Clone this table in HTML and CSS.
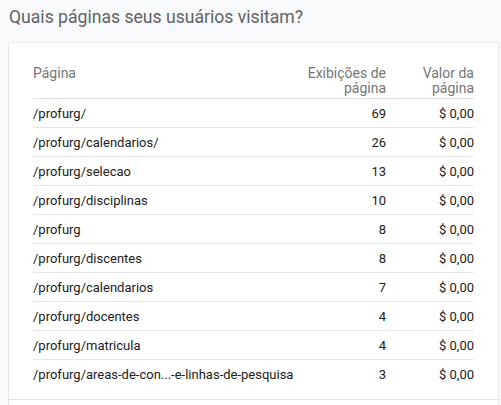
FILE: index.html
```html
<!DOCTYPE html>
<html lang="pt">
<head>
<meta charset="utf-8">
<link rel="stylesheet" href="styles.css">
</head>
<body>
<h2 class="title">Quais páginas seus usuários visitam?</h2>
<div class="card">
  <table class="pages">
    <colgroup>
      <col>
      <col class="c-num">
      <col class="c-val">
    </colgroup>
    <thead>
      <tr>
        <th class="col-page">Página</th>
        <th class="col-num">Exibições de<br>página</th>
        <th class="col-val">Valor da<br>página</th>
      </tr>
    </thead>
    <tbody>
      <tr><td>/profurg/</td><td class="num">69</td><td class="num">$ 0,00</td></tr>
      <tr><td>/profurg/calendarios/</td><td class="num">26</td><td class="num">$ 0,00</td></tr>
      <tr><td>/profurg/selecao</td><td class="num">13</td><td class="num">$ 0,00</td></tr>
      <tr><td>/profurg/disciplinas</td><td class="num">10</td><td class="num">$ 0,00</td></tr>
      <tr><td>/profurg</td><td class="num">8</td><td class="num">$ 0,00</td></tr>
      <tr><td>/profurg/discentes</td><td class="num">8</td><td class="num">$ 0,00</td></tr>
      <tr><td>/profurg/calendarios</td><td class="num">7</td><td class="num">$ 0,00</td></tr>
      <tr><td>/profurg/docentes</td><td class="num">4</td><td class="num">$ 0,00</td></tr>
      <tr><td>/profurg/matricula</td><td class="num">4</td><td class="num">$ 0,00</td></tr>
      <tr><td>/profurg/areas-de-con...-e-linhas-de-pesquisa</td><td class="num">3</td><td class="num">$ 0,00</td></tr>
    </tbody>
  </table>
  <div class="card-footer"></div>
</div>
</body>
</html>
```

FILE: styles.css
```css
html, body {
  margin: 0;
  padding: 0;
  background: #f8f9fa;
  font-family: Roboto, "Liberation Sans", sans-serif;
}
.title {
  margin: 0;
  padding: 5px 0 0 9px;
  font-size: 17.6px;
  font-weight: 400;
  line-height: 25px;
  color: #5f6368;
}
.card {
  margin: 13px 3px 0 9px;
  background: #fff;
  border-radius: 2px;
  box-shadow: 0 0 0 1px rgba(0,0,0,0.05), 0 1px 2px rgba(0,0,0,0.08);
  height: 400px;
  padding: 23px 24px 0;
}
.pages {
  width: 100%;
  border-collapse: collapse;
  table-layout: fixed;
}
.c-num { width: 110px; }
.c-val { width: 88px; }
.pages th {
  font-size: 14px;
  font-weight: 400;
  line-height: 15px;
  color: #757575;
  vertical-align: top;
  padding: 0 0 2px;
  border-bottom: 1px solid #e0e0e0;
  text-align: left;
}
.pages th.col-num, .pages th.col-val {
  text-align: right;
}
.pages td {
  font-size: 13px;
  line-height: 26px;
  height: 26px;
  padding: 2px 0 0;
  color: #212121;
  border-bottom: 1px solid #e8e8e8;
  white-space: nowrap;
  overflow: visible;
}
.pages tbody tr:last-child td {
  border-bottom: none;
}
.pages td.num {
  text-align: right;
}
.card-footer {
  margin: 11px -24px 0;
  border-top: 1px solid #e0e0e0;
}
```
